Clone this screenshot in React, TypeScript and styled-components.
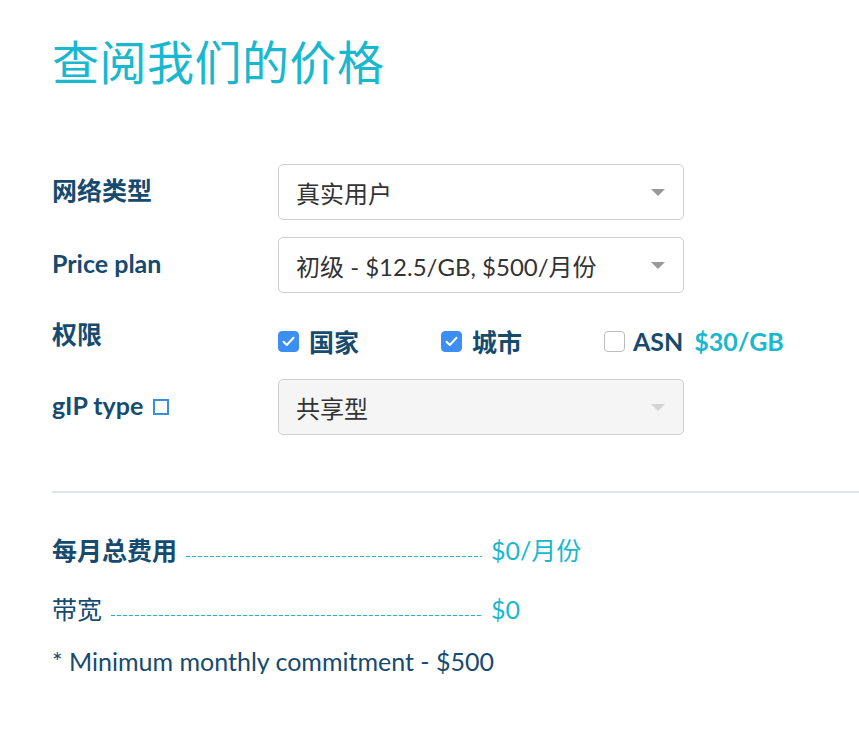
import React from "react";
import styled, { createGlobalStyle } from "styled-components";

const Global = createGlobalStyle`
  html, body { margin: 0; padding: 0; background: #fff; }
  body { font-family: "Lato", "Noto Sans CJK SC", sans-serif; overflow: hidden; }
`;

const CYAN = "#19b8cf";
const NAVY = "#164b6f";
const FONT = `"Lato", "Noto Sans CJK SC", sans-serif`;

const Page = styled.div`
  padding: 32px 0 0 52px;
  width: 807px;
`;

const Title = styled.h1`
  margin: 0;
  font-family: ${FONT};
  font-weight: 400;
  font-size: 47px;
  line-height: 60px;
  color: ${CYAN};
  letter-spacing: 0.5px;
`;

const Form = styled.div`
  margin-top: 72px;
  display: flex;
  flex-direction: column;
  gap: 17px;
`;

const Row = styled.div<{ $h?: number }>`
  display: grid;
  grid-template-columns: 226px max-content;
  align-items: center;
  min-height: ${(p) => p.$h ?? 56}px;
`;

const Label = styled.div`
  font-family: ${FONT};
  font-weight: 700;
  font-size: 25px;
  line-height: 30px;
  color: ${NAVY};
  display: flex;
  align-items: center;
  gap: 10px;
  padding-bottom: 5px;
`;

const SelectBox = styled.div<{ $disabled?: boolean }>`
  box-sizing: border-box;
  width: 406px;
  height: 56px;
  border: 1px solid #cfcfcf;
  border-radius: 5px;
  background: ${(p) => (p.$disabled ? "#f5f5f5" : "#fff")};
  display: flex;
  align-items: center;
  justify-content: space-between;
  padding: 0 18px 0 17px;
  font-family: ${FONT};
  font-size: 24px;
  color: #333;
`;

const Arrow = styled.span<{ $disabled?: boolean }>`
  width: 0;
  height: 0;
  border-left: 7px solid transparent;
  border-right: 7px solid transparent;
  border-top: 7px solid ${(p) => (p.$disabled ? "#d4d4d4" : "#999")};
`;

const Checks = styled.div`
  display: flex;
  align-items: center;
  padding-top: 10px;
  white-space: nowrap;
`;

const CheckItem = styled.label<{ $w?: number; $gap?: number }>`
  flex-shrink: 0;
  display: flex;
  align-items: center;
  gap: ${(p) => p.$gap ?? 10}px;
  width: ${(p) => (p.$w ? `${p.$w}px` : "auto")};
  font-family: ${FONT};
  font-weight: 700;
  font-size: 25px;
  color: ${NAVY};
`;

const Box = styled.span<{ $on?: boolean }>`
  box-sizing: border-box;
  width: 21px;
  height: 21px;
  border-radius: 4px;
  background: ${(p) => (p.$on ? "#3c8ff2" : "#fff")};
  border: 1px solid ${(p) => (p.$on ? "#3c8ff2" : "#bdbdbd")};
  display: flex;
  align-items: center;
  justify-content: center;
`;

const Price = styled.span`
  color: ${CYAN};
  margin-left: 3px;
`;

const Square = styled.span`
  box-sizing: border-box;
  width: 16px;
  height: 16px;
  border: 2px solid #3a8fd8;
  margin-top: 5px;
`;

const Divider = styled.hr`
  margin: 56px 0 0 0;
  border: none;
  height: 2px;
  background: #dde5ea;
`;

const Summary = styled.div`
  margin-top: 37px;
  display: flex;
  flex-direction: column;
`;

const Line = styled.div<{ $h: number }>`
  display: flex;
  align-items: center;
  height: ${(p) => p.$h}px;
`;

const LineLeft = styled.div`
  width: 430px;
  height: 30px;
  display: flex;
  align-items: center;
  gap: 9px;
`;

const LineLabel = styled.span<{ $bold?: boolean }>`
  font-family: ${FONT};
  font-weight: ${(p) => (p.$bold ? 700 : 400)};
  font-size: 25px;
  line-height: 30px;
  color: ${NAVY};
  white-space: nowrap;
`;

const Dots = styled.span`
  flex: 1;
  align-self: flex-end;
  height: 1px;
  margin-bottom: 8px;
  background-image: linear-gradient(to right, ${CYAN} 0 4px, transparent 4px);
  background-size: 6px 1px;
  background-repeat: repeat-x;
`;

const Value = styled.span`
  margin-left: 9px;
  font-family: ${FONT};
  font-size: 25px;
  line-height: 30px;
  color: ${CYAN};
`;

const Note = styled.div`
  font-family: ${FONT};
  font-size: 25px;
  line-height: 26px;
  color: ${NAVY};
`;

const Check = () => (
  <svg width="13" height="11" viewBox="0 0 13 11">
    <path d="M1.5 5.8 L4.8 9 L11.5 1.8" fill="none" stroke="#fff" strokeWidth="2" strokeLinecap="round" strokeLinejoin="round" />
  </svg>
);

export default function App() {
  return (
    <>
      <Global />
      <Page>
        <Title>查阅我们的价格</Title>
        <Form>
          <Row>
            <Label>网络类型</Label>
            <SelectBox>
              <span>真实用户</span>
              <Arrow />
            </SelectBox>
          </Row>
          <Row>
            <Label>Price plan</Label>
            <SelectBox>
              <span>初级 - $12.5/GB, $500/月份</span>
              <Arrow />
            </SelectBox>
          </Row>
          <Row $h={52}>
            <Label>权限</Label>
            <Checks>
              <CheckItem $w={163}>
                <Box $on><Check /></Box>国家
              </CheckItem>
              <CheckItem $w={163}>
                <Box $on><Check /></Box>城市
              </CheckItem>
              <CheckItem $gap={8}>
                <Box />ASN<Price>$30/GB</Price>
              </CheckItem>
            </Checks>
          </Row>
          <Row>
            <Label>
              gIP type <Square />
            </Label>
            <SelectBox $disabled>
              <span>共享型</span>
              <Arrow $disabled />
            </SelectBox>
          </Row>
        </Form>
        <Divider />
        <Summary>
          <Line $h={40}>
            <LineLeft>
              <LineLabel $bold>每月总费用</LineLabel>
              <Dots />
            </LineLeft>
            <Value>$0/月份</Value>
          </Line>
          <Line $h={78}>
            <LineLeft>
              <LineLabel>带宽</LineLabel>
              <Dots />
            </LineLeft>
            <Value>$0</Value>
          </Line>
          <Note>* Minimum monthly commitment - $500</Note>
        </Summary>
      </Page>
    </>
  );
}
